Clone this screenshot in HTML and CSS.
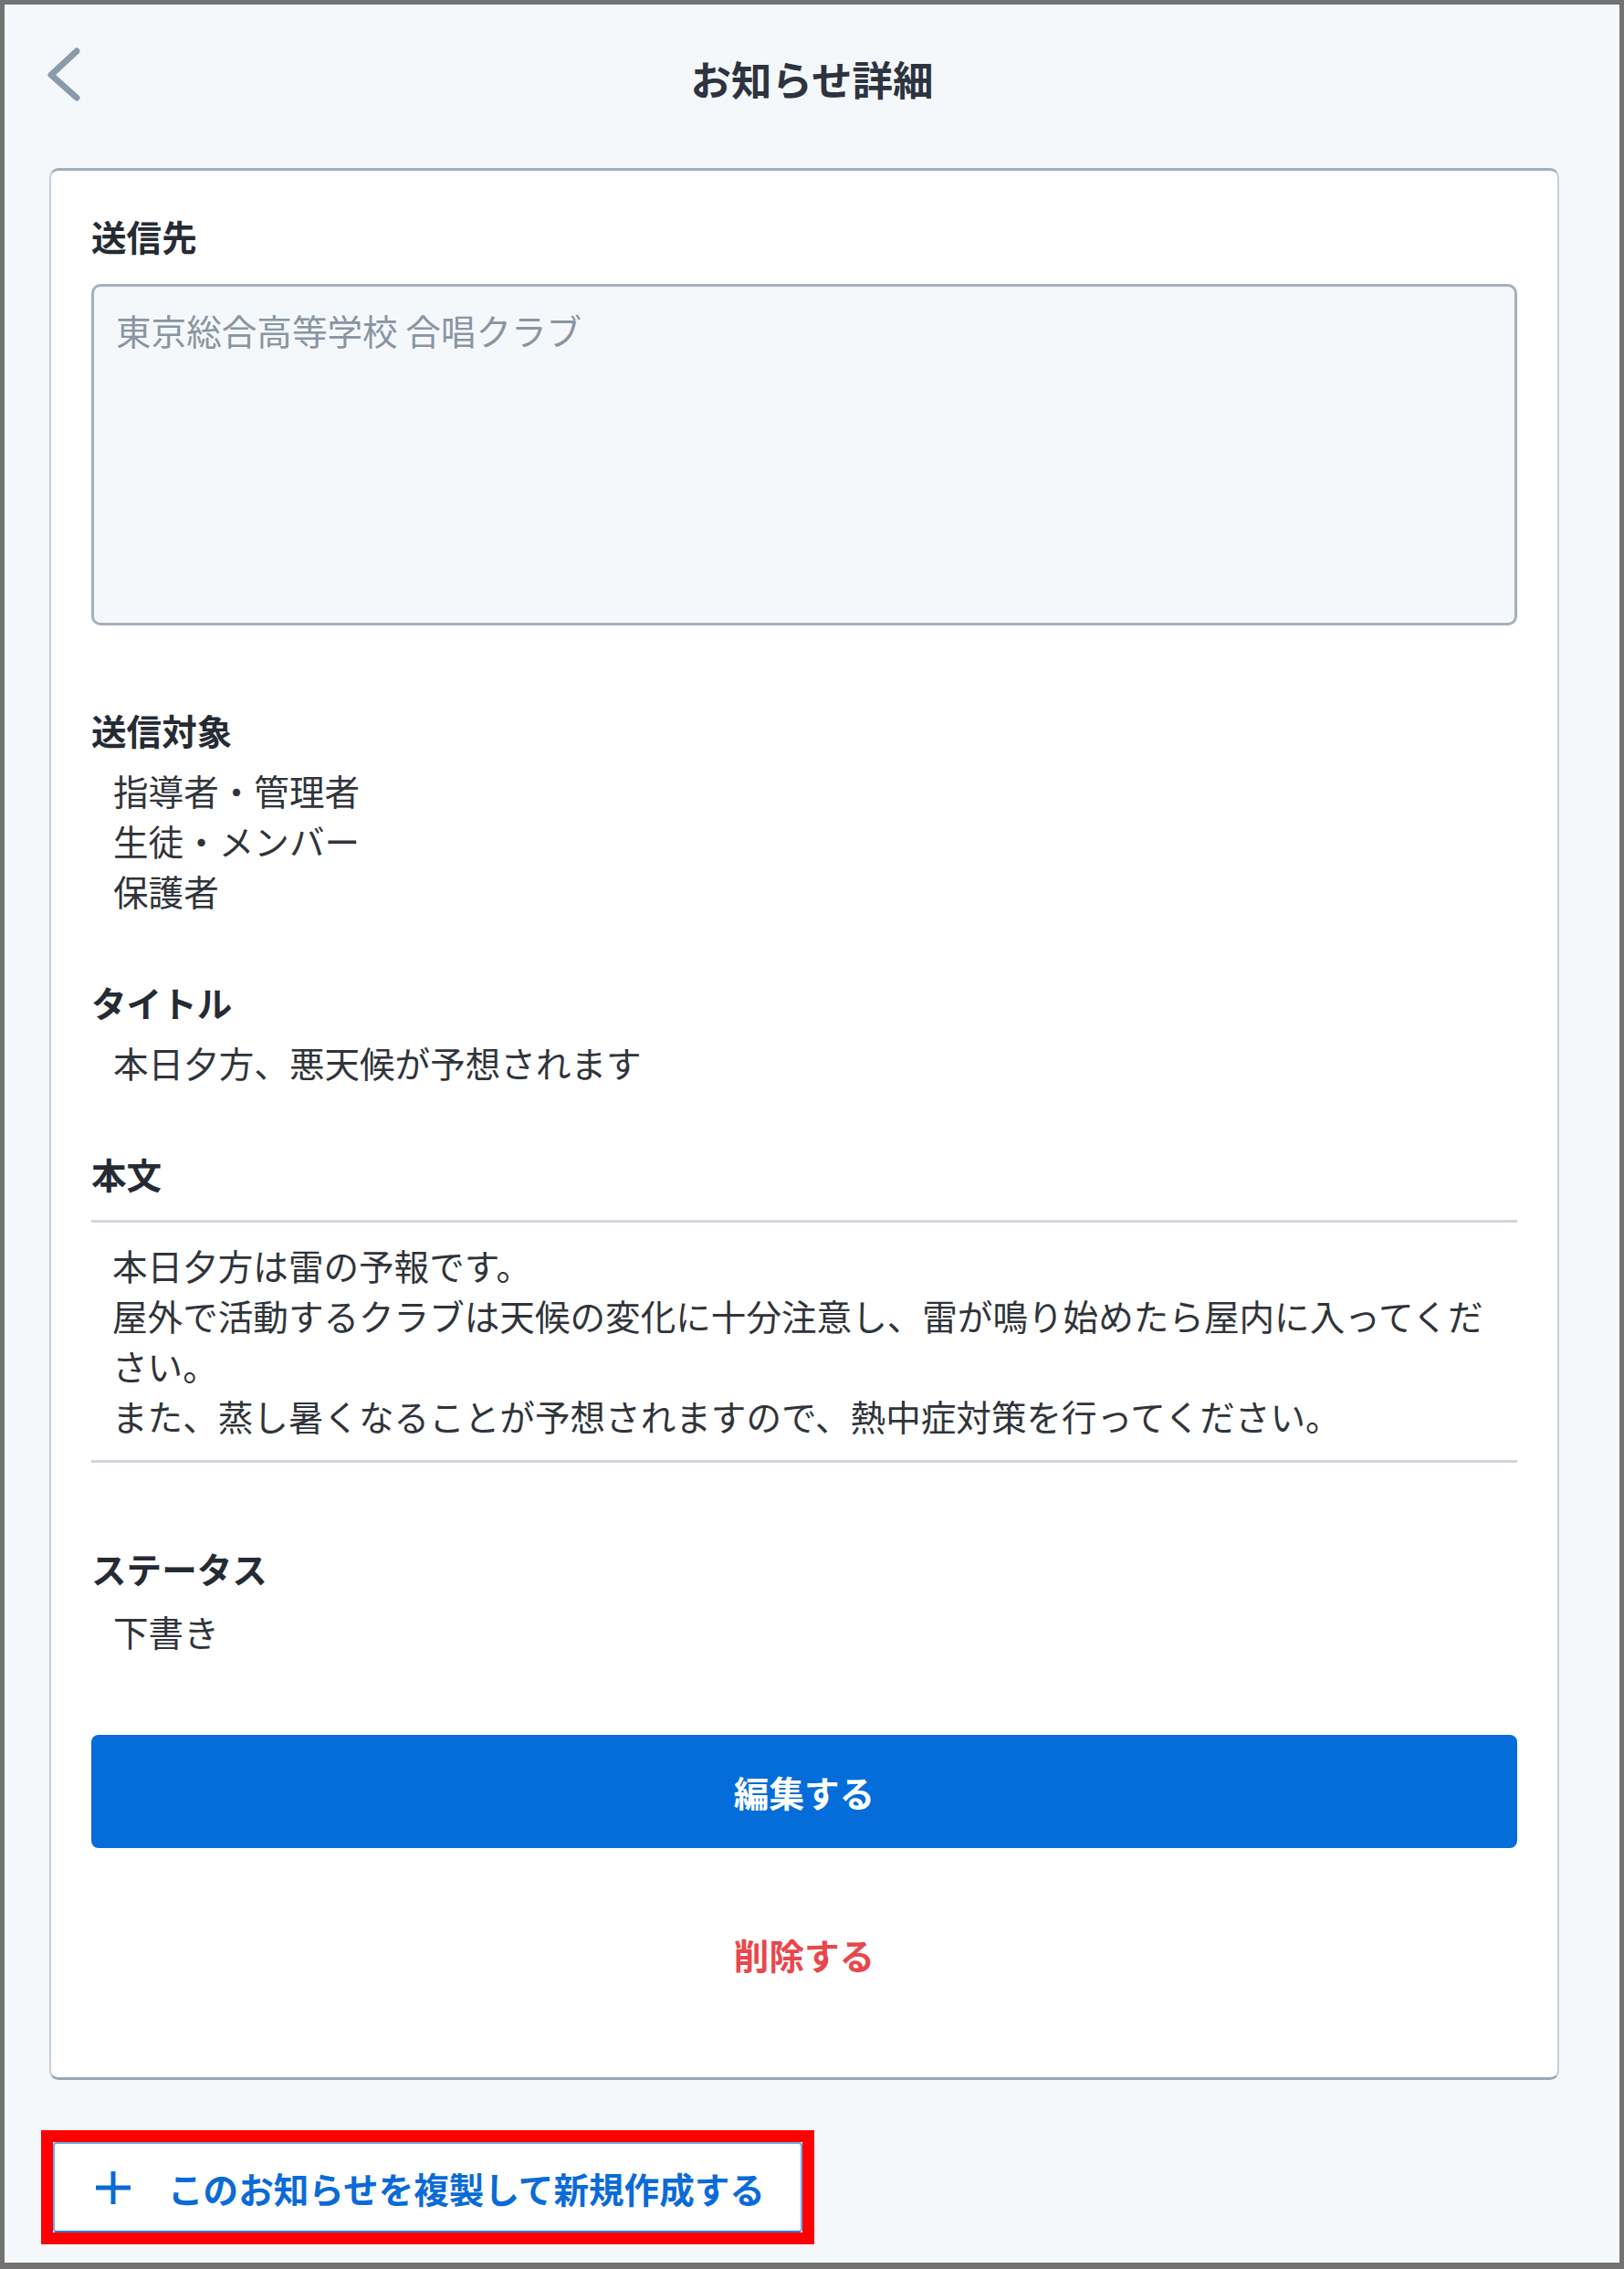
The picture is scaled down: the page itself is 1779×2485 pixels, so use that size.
FILE: index.html
```html
<!DOCTYPE html>
<html lang="ja">
<head>
    <meta charset="UTF-8">
    <meta name="viewport" content="width=device-width, initial-scale=1.0">
    <title>お知らせ詳細</title>
    <link rel="stylesheet" href="styles.css">
</head>
<body>
    <div class="screen">
        <header class="header">
            <button class="back-btn" aria-label="戻る">
                <svg width="44" height="64" viewBox="0 0 44 64">
                    <polyline points="34,6 6,32 34,57" fill="none" stroke="#8c9bab" stroke-width="7" stroke-linecap="round" stroke-linejoin="round"/>
                </svg>
            </button>
            <h1>お知らせ詳細</h1>
            <div></div>
        </header>

        <div class="card">
            <div class="label">送信先</div>
            <div class="recipient-box">東京総合高等学校 合唱クラブ</div>

            <div class="label section">送信対象</div>
            <ul class="target-list">
                <li>指導者・管理者</li>
                <li>生徒・メンバー</li>
                <li>保護者</li>
            </ul>

            <div class="label section-sm">タイトル</div>
            <div class="value">本日夕方、悪天候が予想されます</div>

            <div class="label section-sm">本文</div>
            <div class="body-text">
                <p>本日夕方は雷の予報です。</p>
                <p>屋外で活動するクラブは天候の変化に十分注意し、雷が鳴り始めたら屋内に入ってください。</p>
                <p>また、蒸し暑くなることが予想されますので、熱中症対策を行ってください。</p>
            </div>

            <div class="label section status-label">ステータス</div>
            <div class="value status-value">下書き</div>

            <button class="edit-btn">編集する</button>
            <button class="delete-btn">削除する</button>
        </div>

        <div class="highlight">
            <button class="copy-btn">
                <svg width="40" height="38" viewBox="0 0 40 38">
                    <line x1="20" y1="1" x2="20" y2="37" stroke="#0b6bd6" stroke-width="5"/>
                    <line x1="1" y1="19" x2="39" y2="19" stroke="#0b6bd6" stroke-width="5"/>
                </svg>
                <span>このお知らせを複製して新規作成する</span>
            </button>
        </div>
    </div>
</body>
</html>
```

FILE: styles.css
```css
* {
    box-sizing: border-box;
}
body {
    margin: 0;
    font-family: "Noto Sans CJK JP", "Noto Sans", sans-serif;
    color: #2b2f36;
}
.screen {
    width: 1779px;
    height: 2485px;
    border: 5px solid #727272;
    border-bottom-width: 7px;
    background-color: #f5f8fb;
}
.header {
    height: 162px;
    display: grid;
    grid-template-columns: 1fr auto 1fr;
    align-items: center;
}
.back-btn {
    align-self: start;
    justify-self: start;
    margin: 45px 0 0 45px;
    padding: 0;
    border: none;
    background: none;
    cursor: pointer;
}
.back-btn svg {
    display: block;
}
h1 {
    margin: 0;
    font-size: 44.5px;
    font-weight: 700;
    line-height: 1;
    color: #2d3440;
}
.card {
    width: 1654px;
    margin: 17px 0 0 49px;
    padding: 44px 44px 73px;
    background-color: #fff;
    border: 2px solid #c6ced7;
    border-top: 3px solid #a3aebb;
    border-bottom: 3px solid #9aa7b4;
    border-radius: 10px;
}
.label {
    font-size: 38.6px;
    font-weight: 700;
    line-height: 55px;
    color: #262b33;
}
.label.section {
    margin-top: 87px;
}
.label.status-label {
    margin-top: 88px;
}
.label.section-sm {
    margin-top: 67px;
}
.recipient-box {
    height: 374px;
    margin-top: 25px;
    padding: 20px 24px;
    background-color: #f5f8fb;
    border: 3px solid #a5b0bc;
    border-radius: 10px;
    font-size: 38.6px;
    line-height: 55px;
    color: #8995a2;
}
.target-list {
    list-style: none;
    margin: 11px 0 0;
    padding: 0 0 0 24px;
}
.target-list li,
.value {
    font-size: 38.6px;
    line-height: 55px;
    color: #30343a;
}
.value {
    margin-top: 11px;
    padding-left: 24px;
}
.value.status-value {
    margin-top: 14px;
}
.body-text {
    margin-top: 23px;
    padding: 19px 26px 21px 23px;
    border-top: 3px solid #cfd6de;
    border-bottom: 3px solid #cfd6de;
}
.body-text p {
    margin: 0;
    font-size: 38.6px;
    line-height: 55px;
    color: #30343a;
}
.edit-btn,
.delete-btn {
    display: block;
    width: 100%;
    height: 124px;
    border: none;
    border-radius: 8px;
    font-family: inherit;
    font-size: 38.6px;
    font-weight: 700;
    cursor: pointer;
}
.edit-btn {
    margin-top: 86px;
    background-color: #056dd9;
    color: #fff;
}
.delete-btn {
    margin-top: 54px;
    background: none;
    color: #e8474c;
}
.highlight {
    width: 847px;
    margin: 55px 0 0 40px;
    border: 13px solid #ff0000;
}
.copy-btn {
    width: 100%;
    height: 99px;
    display: flex;
    align-items: center;
    gap: 40px;
    padding: 0 0 0 44px;
    background-color: #fff;
    border: 2px solid #6fa7e8;
    border-bottom-color: #2f7fdc;
    border-radius: 4px;
    font-family: inherit;
    font-size: 38.6px;
    font-weight: 700;
    color: #0b6bd6;
    cursor: pointer;
}
.copy-btn svg {
    flex: none;
}
```
